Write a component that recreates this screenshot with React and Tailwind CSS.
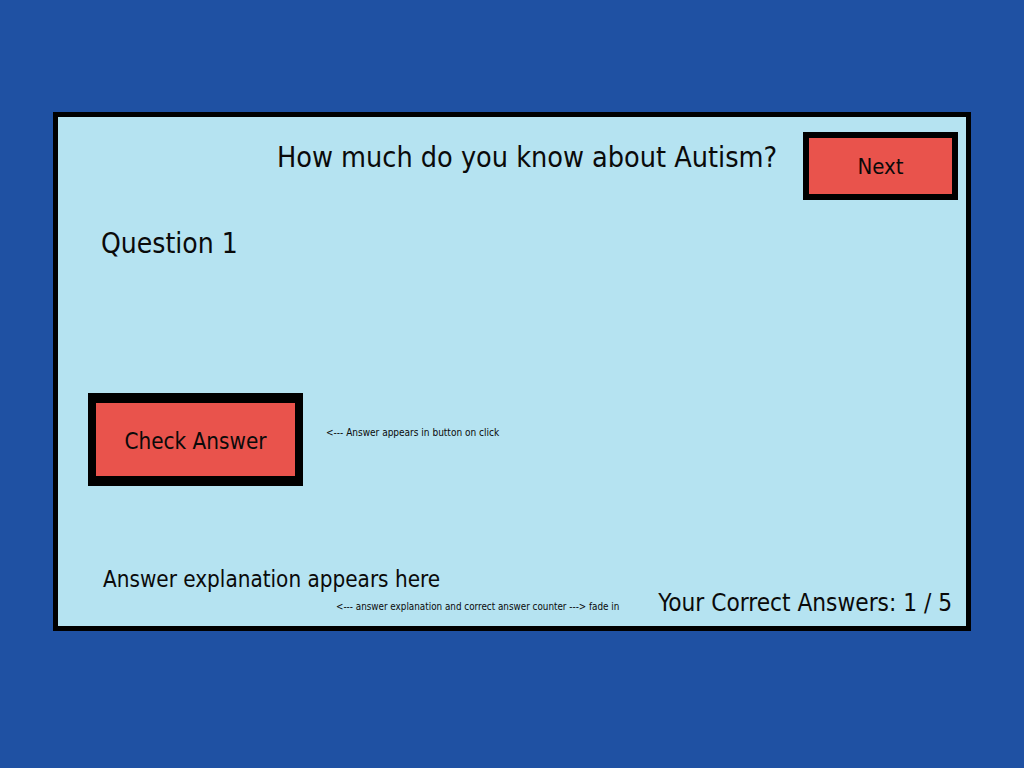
export default function App() {
    const font = { fontFamily: '"DejaVu Sans Condensed", "DejaVu Sans", sans-serif' };

    return (
        <div className="w-[1024px] h-[768px] bg-[#1f51a3] pt-[112px] pl-[53px]" style={font}>
            {/* Quiz card */}
            <div className="w-[918px] h-[519px] border-[5px] border-black bg-[#b5e3f1] flex flex-col text-[#0a0a0a]">
                {/* Header */}
                <div className="flex items-start pt-[15px] pr-[8px]">
                    <h1 className="ml-[219px] mt-[11px] text-[28.5px] leading-[30px] whitespace-nowrap">How much do you know about Autism?</h1>
                    <div className="flex-1" />
                    <button className="w-[155px] h-[68px] border-[6px] border-black bg-[#e9534c] pt-[2px] text-[22px] leading-none">Next</button>
                </div>

                {/* Question */}
                <p className="ml-[43px] mt-[29px] text-[28px] leading-[30px]">Question 1</p>

                {/* Answer button */}
                <div className="flex items-center ml-[30px] mt-[134px]">
                    <button className="w-[215px] h-[93px] border-x-[8px] border-y-[10px] border-black bg-[#e9534c] pt-[3px] text-[22.3px] leading-none">Check Answer</button>
                    <span className="ml-[23px] mb-[14px] text-[10px] leading-none whitespace-nowrap">&lt;--- Answer appears in button on click</span>
                </div>

                {/* Footer */}
                <div className="flex-1" />
                <div className="flex items-end pb-[11px] pr-[14px]">
                    <div className="ml-[45px] mb-[3px] flex flex-col">
                        <p className="text-[22.3px] leading-[24px] whitespace-nowrap">Answer explanation appears here</p>
                        <p className="ml-[233px] mt-[11px] text-[9.8px] leading-[10px] whitespace-nowrap">&lt;--- answer explanation and correct answer counter ---&gt; fade in</p>
                    </div>
                    <div className="flex-1" />
                    <p className="text-[24.2px] leading-[24px] whitespace-nowrap">Your Correct Answers: 1 / 5</p>
                </div>
            </div>
        </div>
    );
}
